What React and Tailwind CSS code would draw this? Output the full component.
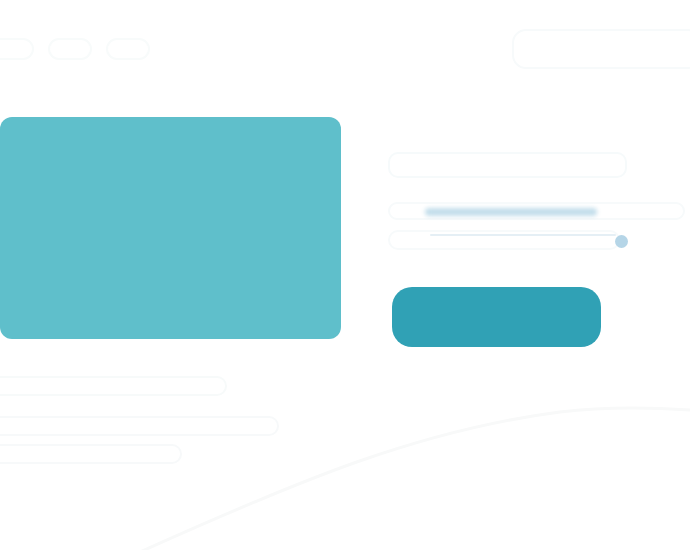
export default function App() {
  return (
    <div className="relative w-[690px] h-[550px] overflow-hidden bg-white font-['Liberation_Sans',sans-serif]">
      {/* faint curve */}
      <svg className="absolute left-0 top-0 pointer-events-none" width="690" height="550" viewBox="0 0 690 550">
        <path d="M140 552 C 300 480, 420 430, 560 412 C 610 406, 660 408, 690 410" stroke="#f8f9f9" strokeWidth="3" fill="none" />
      </svg>

      {/* header */}
      <div className="relative flex items-center justify-between h-[98px]">
        <div className="flex items-center gap-[14px] -ml-[10px]">
          <div className="w-[44px] h-[22px] rounded-full border-2 border-[#f8fbfb]" />
          <div className="w-[44px] h-[22px] rounded-full border-2 border-[#f8fbfb]" />
          <div className="w-[44px] h-[22px] rounded-full border-2 border-[#f8fbfb]" />
        </div>
        <div className="w-[190px] h-[40px] -mr-[12px] rounded-[14px] border-2 border-[#f7fafb]" />
      </div>

      {/* main */}
      <div className="relative flex mt-[19px]">
        <div className="w-[341px] h-[222px] rounded-[12px] bg-[#5fbfcb]" />
        <div className="flex flex-col ml-[47px] pt-[35px]">
          <div className="w-[239px] h-[26px] rounded-[10px] border-2 border-[#f6fafb]" />
          <div className="relative mt-[24px] w-[297px] h-[18px] rounded-full border-2 border-[#f7fafb]">
            <div className="absolute left-[35px] top-[4px] w-[172px] h-[8px] rounded-full bg-[#c3deeb] blur-[2px]" />
          </div>
          <div className="relative mt-[10px] w-[232px] h-[20px] rounded-full border-2 border-[#f7fafb]">
            <div className="absolute left-[40px] top-[2px] w-[186px] h-[2px] rounded-full bg-[#e5eff5]" />
            <div className="absolute left-[225px] top-[3px] w-[13px] h-[13px] rounded-full bg-[#b5d5e7]" />
          </div>
          <div className="mt-[37px] ml-[4px] w-[209px] h-[60px] rounded-[20px] bg-[#30a1b5]" />
        </div>
      </div>

      {/* bottom lines */}
      <div className="relative flex flex-col mt-[29px] gap-[20px]">
        <div className="w-[227px] h-[20px] rounded-r-full border-2 border-l-0 border-[#f7fafa]" />
        <div className="w-[279px] h-[20px] rounded-r-full border-2 border-l-0 border-[#f7f9fa]" />
        <div className="-mt-[12px] w-[182px] h-[20px] rounded-r-full border-2 border-l-0 border-[#f7f9fa]" />
      </div>
    </div>
  );
}
